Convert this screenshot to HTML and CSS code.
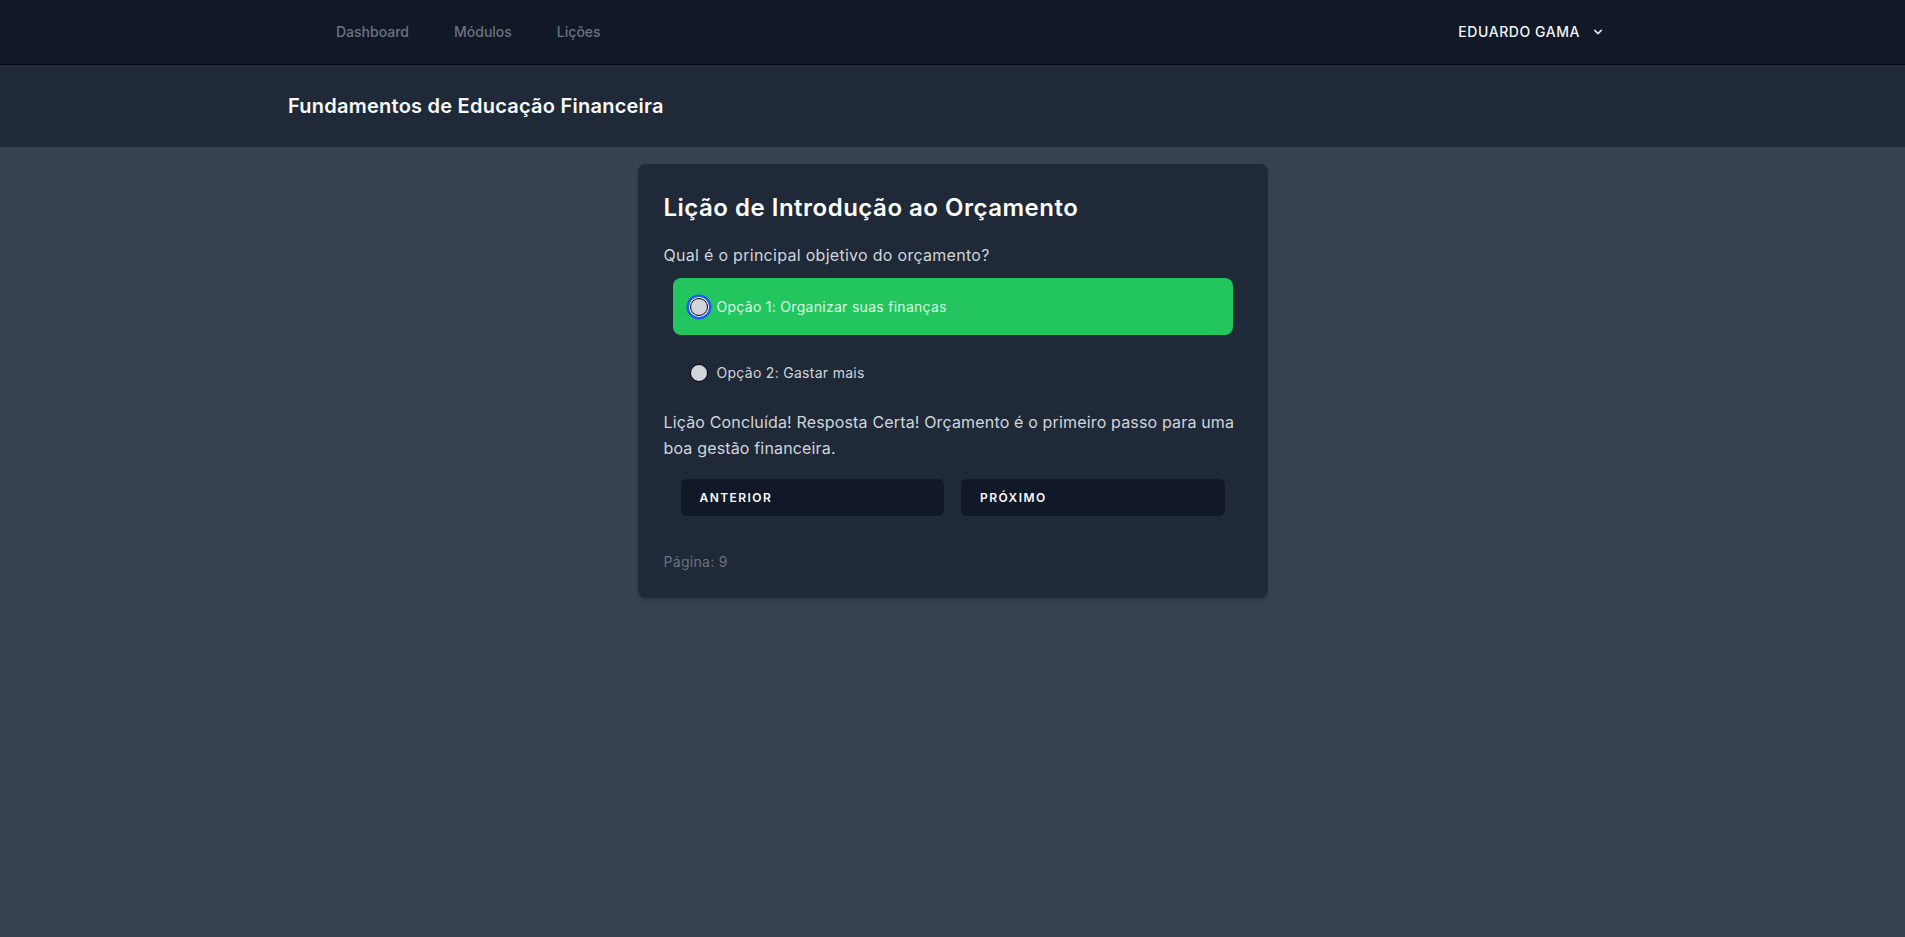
FILE: index.html
```html
<!DOCTYPE html>
<html lang="pt-BR">
<head>
<meta charset="utf-8">
<title>Lição de Introdução ao Orçamento</title>
<link rel="stylesheet" href="styles.css">
</head>
<body>
<div class="page">
  <nav class="topnav">
    <div class="nav-links">
      <a class="nav-link" href="#">Dashboard</a>
      <a class="nav-link" href="#">Módulos</a>
      <a class="nav-link" href="#">Lições</a>
    </div>
    <button class="user-menu" type="button">
      <span>EDUARDO GAMA</span>
      <svg class="chevron" width="16" height="16" viewBox="0 0 20 20" fill="currentColor" aria-hidden="true"><path fill-rule="evenodd" d="M5.293 7.293a1 1 0 011.414 0L10 10.586l3.293-3.293a1 1 0 111.414 1.414l-4 4a1 1 0 01-1.414 0l-4-4a1 1 0 010-1.414z" clip-rule="evenodd"/></svg>
    </button>
  </nav>
  <header class="page-header">
    <h2 class="page-title">Fundamentos de Educação Financeira</h2>
  </header>
  <main class="main">
    <section class="card">
      <h1 class="lesson-title">Lição de Introdução ao Orçamento</h1>
      <p class="question">Qual é o principal objetivo do orçamento?</p>
      <div class="options">
        <label class="option option-correct">
          <span class="radio radio-focus"></span>
          <span class="option-text">Opção 1: Organizar suas finanças</span>
        </label>
        <label class="option">
          <span class="radio"></span>
          <span class="option-text">Opção 2: Gastar mais</span>
        </label>
      </div>
      <p class="feedback">Lição Concluída! Resposta Certa! Orçamento é o primeiro passo para uma boa gestão financeira.</p>
      <div class="actions">
        <button class="btn" type="button">Anterior</button>
        <button class="btn" type="button">Próximo</button>
      </div>
      <p class="page-num">Página: 9</p>
    </section>
  </main>
</div>
</body>
</html>
```
FILE: styles.css
```css
* { box-sizing: border-box; }
html, body { margin: 0; padding: 0; }
body {
  font-family: Inter, "Noto Sans", "Liberation Sans", sans-serif;
  background: #374151;
  color: #f3f4f6;
  letter-spacing: 0.018em;
}
.page { min-height: 100vh; display: flex; flex-direction: column; }

.topnav {
  height: 65px;
  background: #111827;
  border-bottom: 1px solid #030712;
  display: flex;
  align-items: center;
  justify-content: space-between;
  padding: 0 299px 0 336px;
}
.nav-links { display: flex; gap: 45px; align-items: center; }
.nav-link {
  font-size: 14px;
  line-height: 20px;
  color: #6b7280;
  text-decoration: none;
  font-weight: 500;
  letter-spacing: 0;
}
.user-menu {
  display: flex;
  align-items: center;
  gap: 10px;
  background: none;
  border: 0;
  padding: 0;
  color: #f3f4f6;
  font-family: inherit;
  font-size: 14px;
  font-weight: 500;
  line-height: 20px;
  letter-spacing: 0.04em;
}
.chevron { color: #e5e7eb; }

.page-header {
  background: #1f2937;
  padding: 27px 288px;
}
.page-title {
  margin: 0;
  font-size: 20px;
  line-height: 28px;
  font-weight: 600;
  color: #f9fafb;
  letter-spacing: 0.012em;
}

.main {
  flex: 1;
  padding-top: 17px;
  display: flex;
  justify-content: center;
  align-items: flex-start;
}
.card {
  width: 630px;
  background: #1f2937;
  border-radius: 8px;
  padding: 28px 26px 26px;
  box-shadow: 0 4px 6px -1px rgba(0,0,0,.12), 0 2px 4px -2px rgba(0,0,0,.1);
}
.lesson-title {
  margin: 0;
  font-size: 24px;
  line-height: 32px;
  font-weight: 600;
  color: #fff;
  letter-spacing: 0.021em;
}
.question {
  margin: 19px 0 0;
  font-size: 16px;
  line-height: 24px;
  color: #d1d5db;
}
.options {
  margin: 11px 9px 0;
  display: flex;
  flex-direction: column;
  gap: 9px;
}
.option {
  height: 57px;
  display: flex;
  align-items: center;
  gap: 9px;
  padding-left: 17px;
  border-radius: 8px;
  font-size: 14px;
  line-height: 20px;
  color: #d1d5db;
}
.option-correct { background: #22c55e; color: #dcfce7; }
.radio {
  width: 18px;
  height: 18px;
  border-radius: 50%;
  background: #d1d5db;
  border: 1px solid #000;
  flex: none;
}
.radio-focus {
  box-shadow: 0 0 0 1px #ffffff, 0 0 0 3.5px #1f5bf0;
}
.feedback {
  margin: 8px 0 0;
  font-size: 16px;
  line-height: 26px;
  color: #d1d5db;
  letter-spacing: 0.01em;
}
.actions {
  margin-top: 18px;
  padding: 0 17px;
  display: grid;
  grid-template-columns: 1fr 1fr;
  gap: 17px;
}
.btn {
  height: 37px;
  background: #111827;
  border: 0;
  border-radius: 6px;
  color: #f9fafb;
  font-family: inherit;
  font-size: 12px;
  font-weight: 600;
  letter-spacing: 0.12em;
  text-transform: uppercase;
  text-align: left;
  padding: 0 19px;
}
.page-num {
  margin: 36px 0 0;
  font-size: 14px;
  line-height: 20px;
  color: #6b7280;
}
```
